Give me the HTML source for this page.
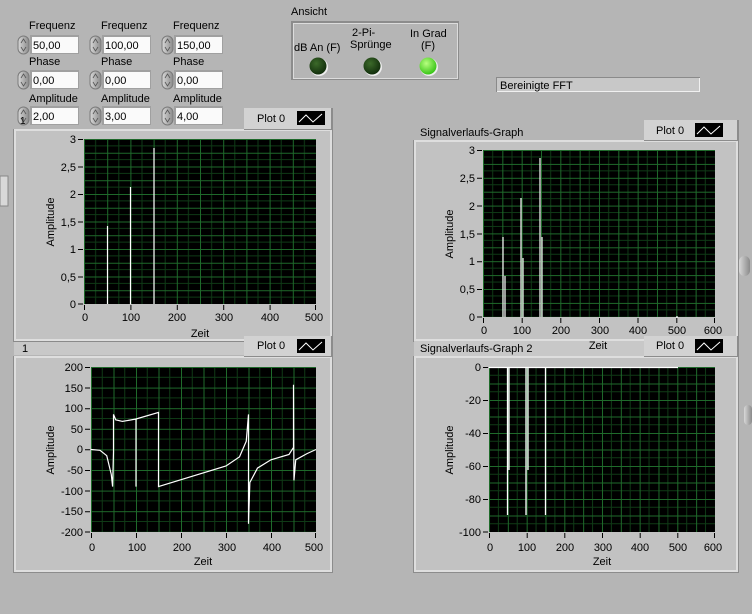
<!DOCTYPE html>
<html><head><meta charset="utf-8"><style>
body{margin:0;background:#b5b5b5;}
svg{display:block;font-family:"Liberation Sans",sans-serif;font-size:11px;}
</style></head><body>
<svg width="752" height="614" viewBox="0 0 752 614" xmlns="http://www.w3.org/2000/svg">
<defs>
<pattern id="g1" x="84" y="139" width="23.2" height="13.75" patternUnits="userSpaceOnUse"><rect width="23.2" height="13.75" fill="#000"/><path d="M11.6 0V13.75M0 6.875H23.2" stroke="#0f3a16" stroke-width="1"/><path d="M0.5 0V13.75M0 0.5H23.2" stroke="#1f6a2b" stroke-width="1"/></pattern>
<pattern id="g2" x="91" y="367" width="22.5" height="20.6" patternUnits="userSpaceOnUse"><rect width="22.5" height="20.6" fill="#000"/><path d="M11.25 0V20.6M0 10.3H22.5" stroke="#0f3a16"/><path d="M0.5 0V20.6M0 0.5H22.5" stroke="#1f6a2b"/></pattern>
<pattern id="g3" x="483" y="150" width="19.33" height="13.9" patternUnits="userSpaceOnUse"><rect width="19.33" height="13.9" fill="#000"/><path d="M9.67 0V13.9M0 6.95H19.33" stroke="#0f3a16"/><path d="M0.5 0V13.9M0 0.5H19.33" stroke="#1f6a2b"/></pattern>
<pattern id="g4" x="489" y="367" width="18.83" height="16.5" patternUnits="userSpaceOnUse"><rect width="18.83" height="16.5" fill="#000"/><path d="M9.4 0V16.5M0 8.25H18.83" stroke="#0f3a16"/><path d="M0.5 0V16.5M0 0.5H18.83" stroke="#1f6a2b"/></pattern>
<radialGradient id="led1" cx="0.4" cy="0.35" r="0.7"><stop offset="0" stop-color="#3c6a2a"/><stop offset="1" stop-color="#0f2a0a"/></radialGradient>
<radialGradient id="led2" cx="0.4" cy="0.35" r="0.7"><stop offset="0" stop-color="#b8ff80"/><stop offset="1" stop-color="#30c010"/></radialGradient>
<linearGradient id="spin" x1="0" x2="1"><stop offset="0" stop-color="#d8d8d8"/><stop offset="1" stop-color="#8a8a8a"/></linearGradient>
<g id="spinner"><rect x="0" y="0" width="11" height="18" rx="5.5" fill="url(#spin)" stroke="#7a7a7a"/><path d="M3 7L5.5 3L8 7M3 11L5.5 15L8 11" fill="none" stroke="#555" stroke-width="0.8"/></g>
<g id="legicon"><rect width="28" height="14" fill="#000"/><path d="M2 11L9 4L16 11L25 3" fill="none" stroke="#fff"/></g>
</defs>
<rect width="752" height="614" fill="#b5b5b5"/>

<g fill="#000">
<text x="29" y="29">Frequenz</text><text x="101" y="29">Frequenz</text><text x="173" y="29">Frequenz</text>
<text x="29" y="65">Phase</text><text x="101" y="65">Phase</text><text x="173" y="65">Phase</text>
<text x="29" y="102">Amplitude</text><text x="101" y="102">Amplitude</text><text x="173" y="102">Amplitude</text>
</g>
<g>
<rect x="30" y="35" width="49" height="19" fill="#a0a0a0"/><rect x="32" y="37" width="46" height="16" fill="#fafafa"/>
<rect x="102" y="35" width="49" height="19" fill="#a0a0a0"/><rect x="104" y="37" width="46" height="16" fill="#fafafa"/>
<rect x="174" y="35" width="49" height="19" fill="#a0a0a0"/><rect x="176" y="37" width="46" height="16" fill="#fafafa"/>
<rect x="30" y="70" width="49" height="19" fill="#a0a0a0"/><rect x="32" y="72" width="46" height="16" fill="#fafafa"/>
<rect x="102" y="70" width="49" height="19" fill="#a0a0a0"/><rect x="104" y="72" width="46" height="16" fill="#fafafa"/>
<rect x="174" y="70" width="49" height="19" fill="#a0a0a0"/><rect x="176" y="72" width="46" height="16" fill="#fafafa"/>
<rect x="30" y="106" width="49" height="19" fill="#a0a0a0"/><rect x="32" y="108" width="46" height="16" fill="#fafafa"/>
<rect x="102" y="106" width="49" height="19" fill="#a0a0a0"/><rect x="104" y="108" width="46" height="16" fill="#fafafa"/>
<rect x="174" y="106" width="49" height="19" fill="#a0a0a0"/><rect x="176" y="108" width="46" height="16" fill="#fafafa"/>
<use href="#spinner" x="18" y="36"/><use href="#spinner" x="90" y="36"/><use href="#spinner" x="162" y="36"/>
<use href="#spinner" x="18" y="71"/><use href="#spinner" x="90" y="71"/><use href="#spinner" x="162" y="71"/>
<use href="#spinner" x="18" y="107"/><use href="#spinner" x="90" y="107"/><use href="#spinner" x="162" y="107"/>
</g>
<g fill="#000">
<text x="33" y="49">50,00</text><text x="105" y="49">100,00</text><text x="177" y="49">150,00</text>
<text x="33" y="84">0,00</text><text x="105" y="84">0,00</text><text x="177" y="84">0,00</text>
<text x="33" y="120">2,00</text><text x="105" y="120">3,00</text><text x="177" y="120">4,00</text>
<text x="20" y="124" font-size="10">1</text>
</g>

<text x="291" y="15">Ansicht</text>
<rect x="291" y="21" width="168" height="59" fill="#8c8c8c"/>
<rect x="293" y="23" width="165" height="56" fill="#dcdcdc"/>
<rect x="294" y="24" width="163" height="54" fill="#b5b5b5"/>
<text x="294" y="51">dB An (F)</text>
<text x="352" y="36">2-Pi-</text><text x="350" y="48">Sprünge</text>
<text x="410" y="37">In Grad</text><text x="421" y="49">(F)</text>
<circle cx="319" cy="67" r="9" fill="#eee"/><circle cx="318" cy="66" r="8.5" fill="url(#led1)"/>
<circle cx="373" cy="67" r="9" fill="#eee"/><circle cx="372" cy="66" r="8.5" fill="url(#led1)"/>
<circle cx="429" cy="67" r="9" fill="#eee"/><circle cx="428" cy="66" r="8.5" fill="url(#led2)"/>

<rect x="496" y="77" width="204" height="15" fill="#8a8a8a"/><rect x="497" y="78" width="203" height="14" fill="#f0f0f0"/><rect x="497" y="78" width="202" height="13" fill="#c8c8c8"/>
<text x="500" y="89">Bereinigte FFT</text>

<rect x="0" y="176" width="8" height="30" fill="#d8d8d8" stroke="#888"/>
<rect x="739" y="256" width="11" height="20" rx="5.5" fill="url(#spin)"/>
<rect x="744" y="405" width="8" height="20" rx="4" fill="url(#spin)"/>

<g>
<rect x="13" y="129" width="320" height="213" fill="#8c8c8c"/><rect x="14" y="129" width="318" height="212" fill="#dedede"/><rect x="16" y="131" width="314" height="208" fill="#c2c2c2"/>
<rect x="13" y="356" width="320" height="217" fill="#8c8c8c"/><rect x="14" y="356" width="318" height="216" fill="#dedede"/><rect x="16" y="358" width="314" height="212" fill="#c2c2c2"/>
<rect x="413" y="140" width="326" height="202" fill="#8c8c8c"/><rect x="414" y="140" width="324" height="201" fill="#dedede"/><rect x="416" y="142" width="320" height="197" fill="#c2c2c2"/>
<rect x="413" y="356" width="326" height="217" fill="#8c8c8c"/><rect x="414" y="356" width="324" height="216" fill="#dedede"/><rect x="416" y="358" width="320" height="212" fill="#c2c2c2"/>
</g>
<rect x="14" y="341" width="230" height="14" fill="#c8c8c8"/><line x1="14" y1="341.5" x2="244" y2="341.5" stroke="#8a8a8a"/>
<text x="22" y="352">1</text>
<text x="420" y="136">Signalverlaufs-Graph</text>
<rect x="414" y="341" width="230" height="15" fill="#c8c8c8"/>
<text x="420" y="352">Signalverlaufs-Graph 2</text>

<rect x="244" y="108" width="89" height="22" fill="#8c8c8c"/><rect x="244" y="108" width="87" height="21" fill="#d2d2d2"/><text x="257" y="122">Plot 0</text><use href="#legicon" x="297" y="111"/>
<rect x="644" y="120" width="95" height="21" fill="#8c8c8c"/><rect x="644" y="120" width="93" height="20" fill="#d2d2d2"/><text x="656" y="134">Plot 0</text><use href="#legicon" x="695" y="123"/>
<rect x="244" y="336" width="89" height="21" fill="#8c8c8c"/><rect x="244" y="336" width="87" height="20" fill="#d2d2d2"/><text x="257" y="349">Plot 0</text><use href="#legicon" x="297" y="339"/>
<rect x="644" y="336" width="95" height="21" fill="#8c8c8c"/><rect x="644" y="336" width="93" height="20" fill="#d2d2d2"/><text x="656" y="349">Plot 0</text><use href="#legicon" x="695" y="339"/>

<rect x="84" y="139" width="232" height="165" fill="url(#g1)"/>
<rect x="91" y="367" width="225" height="165" fill="url(#g2)"/>
<rect x="483" y="150" width="232" height="167" fill="url(#g3)"/>
<rect x="489" y="367" width="226" height="165" fill="url(#g4)"/>

<g stroke="#000" fill="none">
<path d="M78 139.5H83M78 167H83M78 194.5H83M78 222H83M78 249.5H83M78 277H83M78 304H83"/>
<path d="M84.5 305V310M130.9 305V310M177.3 305V310M223.7 305V310M270.1 305V310M315.5 305V310"/>
<path d="M85 367.5H90M85 388H90M85 408.7H90M85 429.3H90M85 449.8H90M85 470.5H90M85 491H90M85 511.7H90M85 532H90"/>
<path d="M91.5 533V538M136.5 533V538M181.5 533V538M226.5 533V538M271.5 533V538M315.5 533V538"/>
<path d="M477 150.5H482M477 178.3H482M477 206H482M477 234H482M477 261.7H482M477 289.5H482M477 317H482"/>
<path d="M483.5 318V323M522.2 318V323M560.8 318V323M599.5 318V323M638 318V323M676.8 318V323M714.5 318V323"/>
<path d="M483 367.5H488M483 400.5H488M483 433.5H488M483 466.5H488M483 499.5H488M483 532H488"/>
<path d="M489.5 533V538M527.2 533V538M564.8 533V538M602.5 533V538M640.2 533V538M677.8 533V538M714.5 533V538"/>
</g>
<g fill="#000" text-anchor="end">
<text x="76" y="143">3</text><text x="76" y="171">2,5</text><text x="76" y="198">2</text><text x="76" y="226">1,5</text><text x="76" y="253">1</text><text x="76" y="281">0,5</text><text x="76" y="308">0</text>
<text x="83" y="371">200</text><text x="83" y="392">150</text><text x="83" y="412">100</text><text x="83" y="433">50</text><text x="83" y="453">0</text><text x="83" y="474">-50</text><text x="83" y="495">-100</text><text x="83" y="515">-150</text><text x="83" y="536">-200</text>
<text x="475" y="154">3</text><text x="475" y="182">2,5</text><text x="475" y="210">2</text><text x="475" y="238">1,5</text><text x="475" y="265">1</text><text x="475" y="293">0,5</text><text x="475" y="321">0</text>
<text x="481" y="371">0</text><text x="481" y="404">-20</text><text x="481" y="437">-40</text><text x="481" y="470">-60</text><text x="481" y="503">-80</text><text x="481" y="536">-100</text>
</g>
<g fill="#000" text-anchor="middle">
<text x="85" y="321">0</text><text x="131" y="321">100</text><text x="177" y="321">200</text><text x="224" y="321">300</text><text x="270" y="321">400</text><text x="314" y="321">500</text>
<text x="200" y="337">Zeit</text>
<text x="92" y="551">0</text><text x="137" y="551">100</text><text x="182" y="551">200</text><text x="227" y="551">300</text><text x="272" y="551">400</text><text x="314" y="551">500</text>
<text x="203" y="565">Zeit</text>
<text x="484" y="334">0</text><text x="522" y="334">100</text><text x="561" y="334">200</text><text x="600" y="334">300</text><text x="638" y="334">400</text><text x="677" y="334">500</text><text x="713" y="334">600</text>
<text x="598" y="349">Zeit</text>
<text x="490" y="551">0</text><text x="527" y="551">100</text><text x="565" y="551">200</text><text x="603" y="551">300</text><text x="640" y="551">400</text><text x="678" y="551">500</text><text x="713" y="551">600</text>
<text x="602" y="565">Zeit</text>
</g>
<g fill="#000" text-anchor="middle">
<text transform="translate(54 222) rotate(-90)">Amplitude</text>
<text transform="translate(54 450) rotate(-90)">Amplitude</text>
<text transform="translate(453 234) rotate(-90)">Amplitude</text>
<text transform="translate(453 450) rotate(-90)">Amplitude</text>
</g>

<g stroke="#fff" fill="none" stroke-width="1.2">
<path d="M107.5 304V226M130.5 304V187M154 304V148"/>
<path d="M503 317V237M505 317V276M521 317V198M523 317V258M540 317V158M542 317V237M676 317H678"/>
<path d="M489 367.5H678M507.5 367V515M509 367V470M526 367V515M528 367V470M545.5 367V515" stroke-width="1.3"/>
<path d="M91 449.5L100 450.3L106.75 455.7L111.25 474.3L112.6 486.6L113.5 451.6L113.5 414.4L115.75 419.8L122.5 421.4L136 419L136 486.6L136 419L158.5 412.4L158.5 486.6L226 466L239.5 456.9L246.25 441.2L248.5 414.4L248.5 523.8L249.85 482.5L257.5 468.1L271 459.8L289 454.5L293.5 447.4L293.5 384.7L293.95 480.4L295.75 459.8L307 453.6L316 449.5"/>
</g>
</svg>
</body></html>
